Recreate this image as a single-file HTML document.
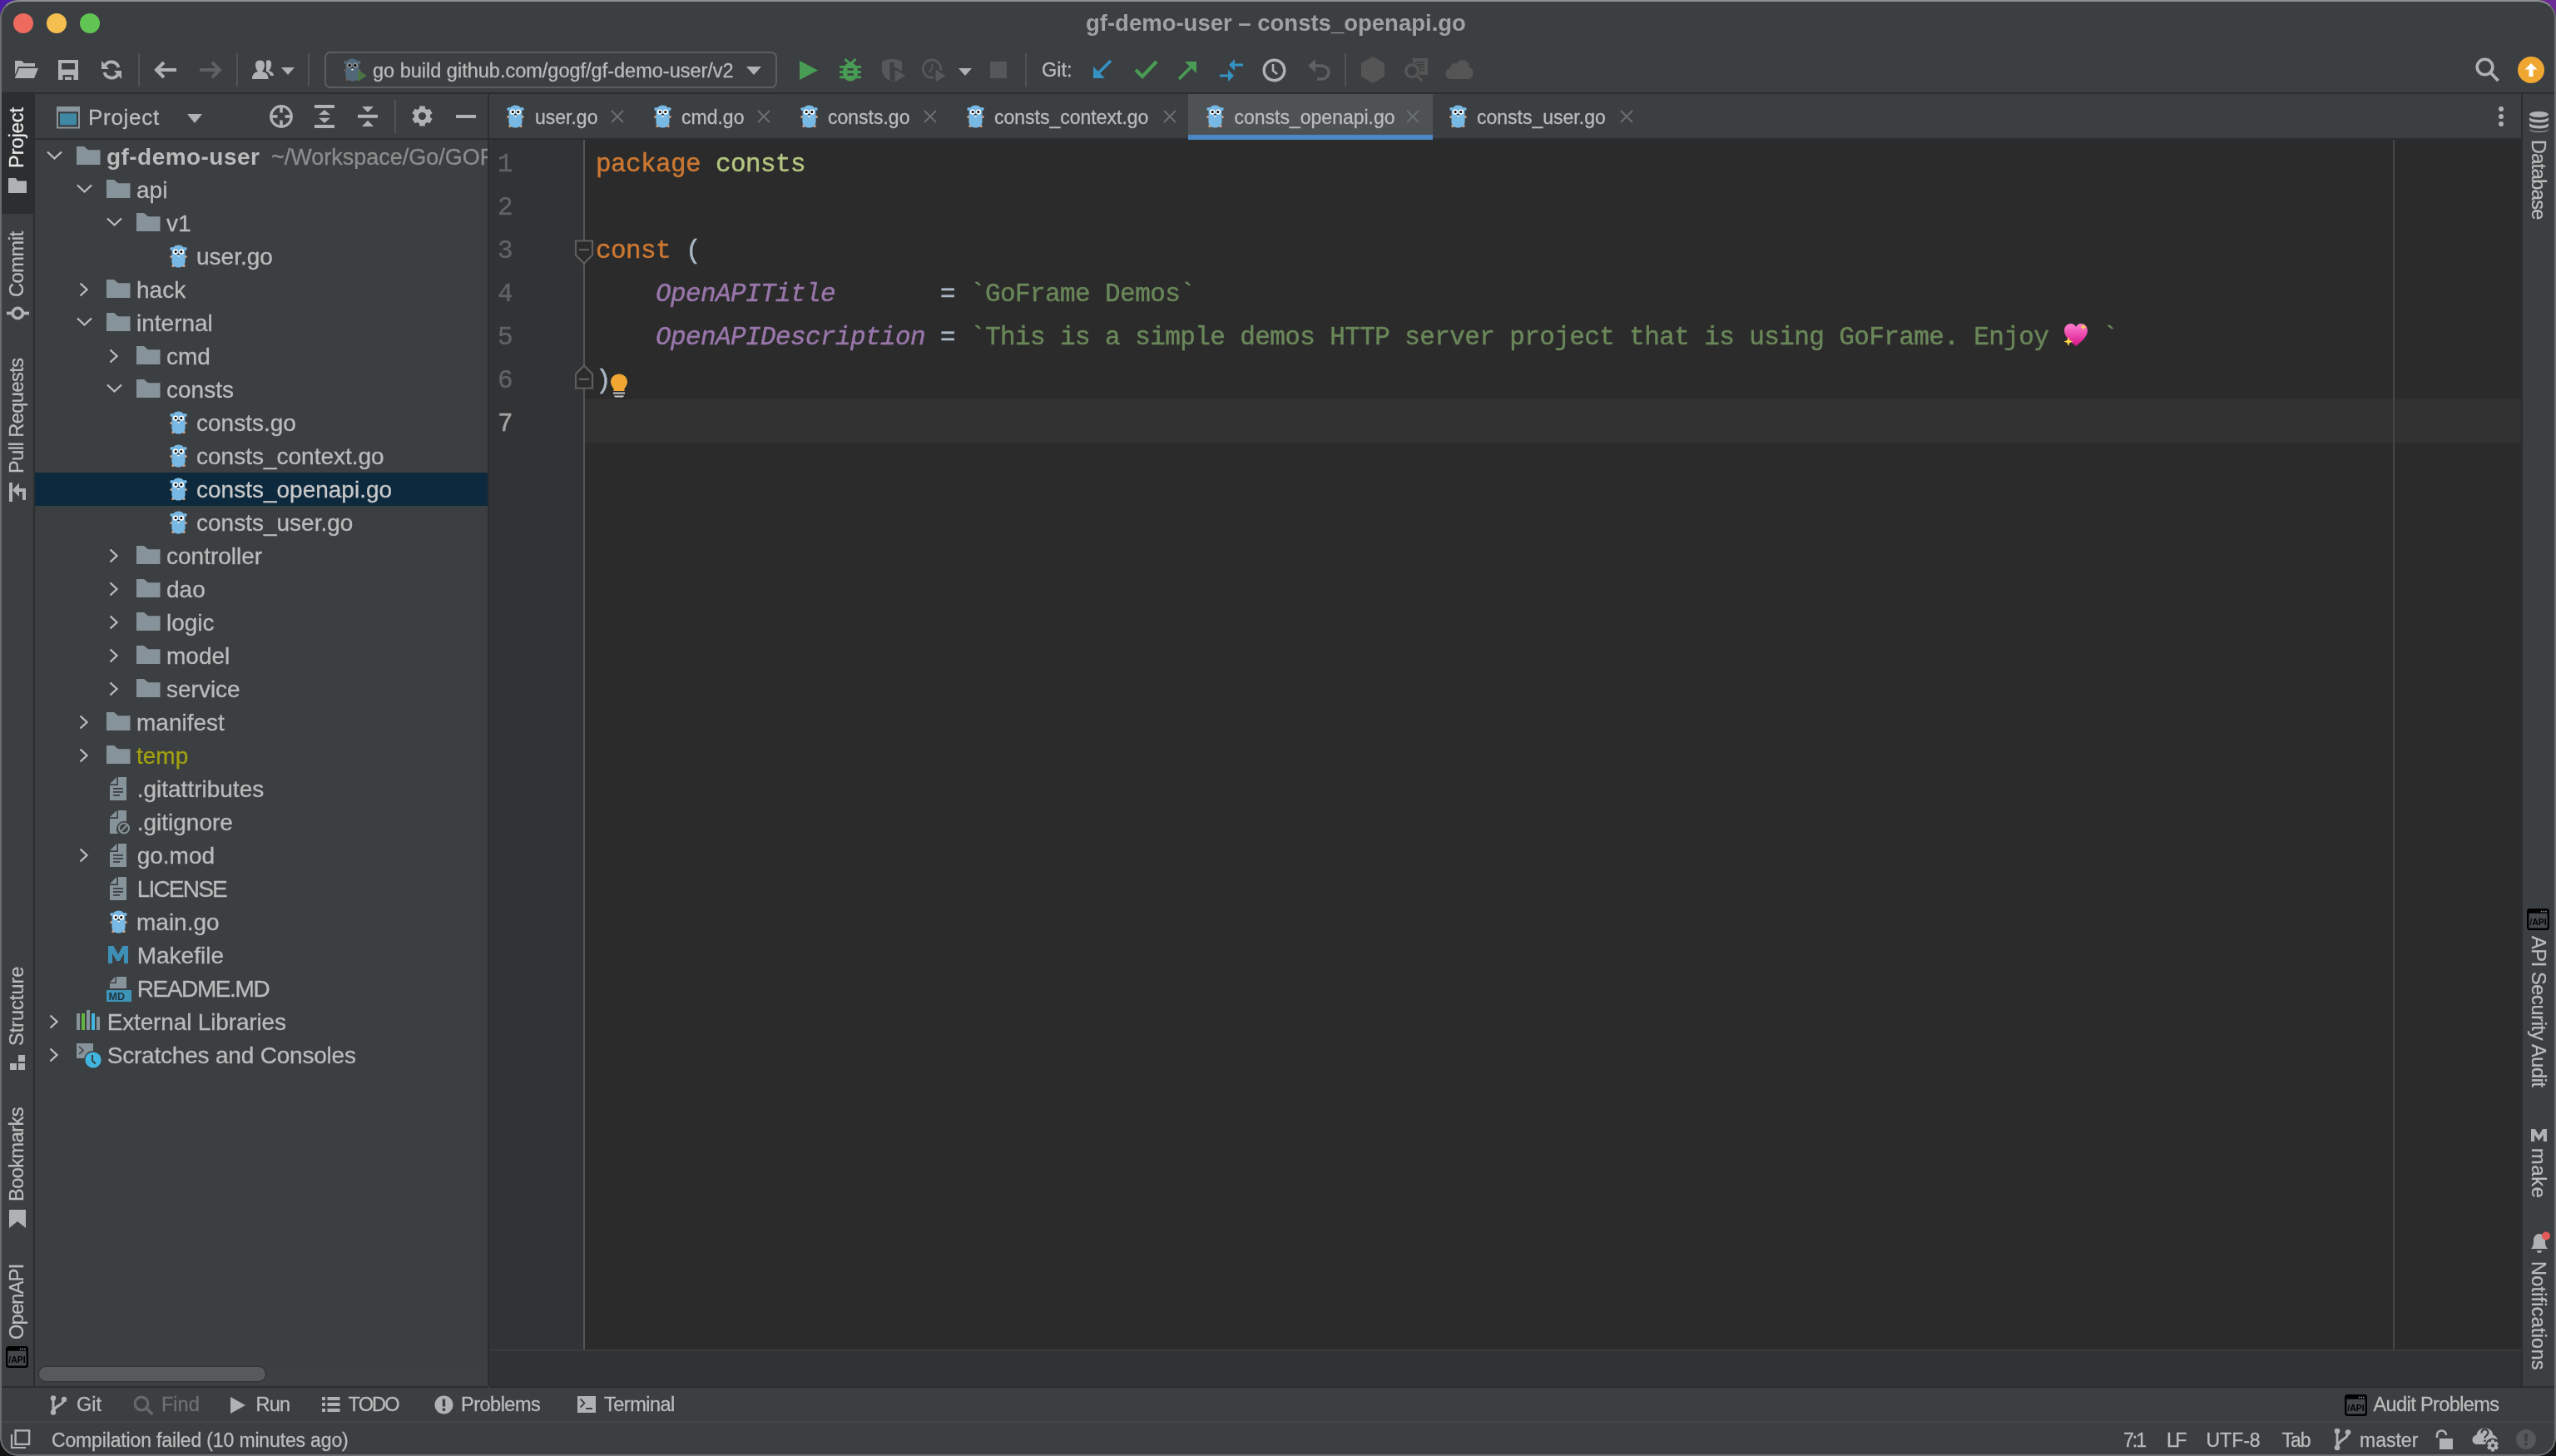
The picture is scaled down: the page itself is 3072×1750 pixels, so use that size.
<!DOCTYPE html><html><head><meta charset="utf-8"><title>GoLand</title><style>html,body{margin:0;padding:0;width:3072px;height:1750px;overflow:hidden;background:#1E1E1E}</style></head><body>
<div style="position:absolute;left:0px;top:0px;width:60px;height:60px;background:#4B1FA3;"></div>
<div style="position:absolute;left:3012px;top:0px;width:60px;height:60px;background:#6B2A98;"></div>
<div style="position:absolute;left:0px;top:1690px;width:60px;height:60px;background:#151515;"></div>
<div style="position:absolute;left:3012px;top:1690px;width:60px;height:60px;background:#151515;"></div>
<div style="position:absolute;left:0;top:0;width:3072px;height:1750px;border-radius:22px;background:#3C3F41;overflow:hidden;will-change:transform">
<div style="position:absolute;left:16px;top:16px;width:24px;height:24px;border-radius:50%;background:#EE6A5F"></div>
<div style="position:absolute;left:56px;top:16px;width:24px;height:24px;border-radius:50%;background:#F5BF4F"></div>
<div style="position:absolute;left:96px;top:16px;width:24px;height:24px;border-radius:50%;background:#61C554"></div>
<div style="position:absolute;left:1305.0px;top:13.5px;font-family:'Liberation Sans', sans-serif;font-size:27.5px;line-height:27.5px;color:#A0A1A2;font-weight:bold;font-style:normal;letter-spacing:0px;white-space:pre;">gf-demo-user – consts_openapi.go</div>
<div style="position:absolute;left:0px;top:111px;width:3072px;height:2px;background:#2B2D2F;"></div>
<svg style="position:absolute;left:17px;top:73px" width="30" height="22" viewBox="0 0 30 22"><path d="M1,0 H9 L12,3 H25 V7 H5 L1,17 Z" fill="#AFB1B3"/><path d="M6,9 H29 L24,21 H0.7 Z" fill="#AFB1B3"/></svg>
<svg style="position:absolute;left:70px;top:72px" width="24" height="24" viewBox="0 0 24 24"><path d="M0,0 H24 V24 H0 Z M4,4 V11.5 H20 V4 Z M5.5,18 V24 H18.5 V18 Z" fill="#AFB1B3" fill-rule="evenodd"/><rect x="8" y="20.5" width="8" height="3.5" fill="#AFB1B3"/></svg>
<svg style="position:absolute;left:122px;top:72px" width="24" height="24" viewBox="0 0 24 24"><path d="M20.5,9 A9,9 0 0 0 4,7" fill="none" stroke="#AFB1B3" stroke-width="3.8"/><path d="M0,1 L0,11 L9,11 Z" fill="#AFB1B3"/><path d="M3.5,15 A9,9 0 0 0 20,17" fill="none" stroke="#AFB1B3" stroke-width="3.8"/><path d="M24,23 L24,13 L15,13 Z" fill="#AFB1B3"/></svg>
<div style="position:absolute;left:166px;top:64px;width:2px;height:40px;background:#505355;"></div>
<svg style="position:absolute;left:185px;top:73px" width="28" height="22" viewBox="0 0 28 22"><path d="M27,11 H4 M12,2 L3,11 L12,20" fill="none" stroke="#AFB1B3" stroke-width="4"/></svg>
<svg style="position:absolute;left:239px;top:73px" width="28" height="22" viewBox="0 0 28 22"><path d="M1,11 H24 M16,2 L25,11 L16,20" fill="none" stroke="#5E6062" stroke-width="4"/></svg>
<div style="position:absolute;left:284px;top:64px;width:2px;height:40px;background:#505355;"></div>
<svg style="position:absolute;left:303px;top:71px" width="26" height="25" viewBox="0 0 26 25"><path d="M17,2 C21,0 24,3 23,8 C22.5,11 21,13 20,14 C24,15 26,17 26,20 H22 C21,17 19,15.5 17,15 Z" fill="#AFB1B3"/><path d="M9.5,1.5 C14,1.5 15.5,5 14.8,9 C14.3,12 13,14 12,15 C17,16 19.5,18.5 19.5,24 H0 C0,18.5 3,16 7,15 C6,14 4.7,12 4.2,9 C3.5,5 5,1.5 9.5,1.5 Z" fill="#AFB1B3" stroke="#3C3F41" stroke-width="0"/></svg>
<svg style="position:absolute;left:338px;top:81px" width="16" height="9" viewBox="0 0 16 9"><path d="M0,0 H16 L8,9 Z" fill="#AFB1B3"/></svg>
<div style="position:absolute;left:370px;top:64px;width:2px;height:40px;background:#505355;"></div>
<div style="position:absolute;left:390px;top:62px;width:540px;height:40px;border:2px solid #5B5E61;border-radius:7px"></div>
<svg style="position:absolute;left:413px;top:70px" width="21" height="28" viewBox="0 0 21 28"><g opacity="1.0"><circle cx="1.8" cy="14.5" r="1.6" fill="#6E5A50"/><circle cx="19.2" cy="14.5" r="1.6" fill="#6E5A50"/><circle cx="4" cy="25.5" r="1.7" fill="#6E5A50"/><circle cx="17" cy="25.5" r="1.7" fill="#6E5A50"/><ellipse cx="2.6" cy="5" rx="2.4" ry="2" fill="#51687B"/><ellipse cx="18.4" cy="5" rx="2.4" ry="2" fill="#51687B"/><path d="M2.6,9 C2.6,3.5 6,0.5 10.5,0.5 C15,0.5 18.4,3.5 18.4,9 L18.6,20 C18.6,25 15,27.6 10.5,27.6 C6,27.6 2.4,25 2.4,20 Z" fill="#51687B"/><circle cx="7" cy="8.6" r="3.1" fill="#8C8C8C"/><circle cx="14" cy="8.6" r="3.1" fill="#8C8C8C"/><circle cx="7.2" cy="8.6" r="1.5" fill="#000"/><circle cx="13.8" cy="8.6" r="1.5" fill="#000"/><ellipse cx="10.5" cy="11.8" rx="1.6" ry="1.1" fill="#222"/><rect x="9.4" y="12.6" width="2.2" height="1.8" fill="#fff"/></g></svg>
<svg style="position:absolute;left:430px;top:84px" width="11" height="14" viewBox="0 0 11 14"><path d="M0,0 L11,7 L0,14 Z" fill="#4B7447"/></svg>
<div style="position:absolute;left:448.0px;top:73.7px;font-family:'Liberation Sans', sans-serif;font-size:23.5px;line-height:23.5px;color:#BBBBBB;font-weight:normal;font-style:normal;letter-spacing:0px;white-space:pre;-webkit-text-stroke:0.3px currentColor;">go build github.com/gogf/gf-demo-user/v2</div>
<svg style="position:absolute;left:897px;top:80px" width="18" height="10" viewBox="0 0 18 10"><path d="M0,0 H18 L9,10 Z" fill="#AFB1B3"/></svg>
<svg style="position:absolute;left:961px;top:73px" width="22" height="23" viewBox="0 0 22 23"><path d="M0,0 L22,11.5 L0,23 Z" fill="#499C54"/></svg>
<svg style="position:absolute;left:1009px;top:69px" width="26" height="30" viewBox="0 0 26 30"><g fill="#499C54"><path d="M6.5,2 L13,8 L19.5,2" fill="none" stroke="#499C54" stroke-width="3"/><ellipse cx="13" cy="17.5" rx="9.3" ry="11"/><rect x="0" y="10" width="26" height="2.8"/><rect x="0" y="16.2" width="26" height="2.8"/><rect x="0" y="22.4" width="26" height="2.8"/></g><rect x="9.5" y="13.2" width="7.3" height="2.4" fill="#3C3F41"/><rect x="9.5" y="19.2" width="7.3" height="2.6" fill="#3C3F41"/></svg>
<svg style="position:absolute;left:1059px;top:71px" width="32" height="30" viewBox="0 0 32 30"><path d="M1,3 C5,1 9,0 13,0 C17,0 21,1 25,3 V12 C25,19 21,24 13,27 C5,24 1,19 1,12 Z" fill="#555759"/><rect x="10.5" y="4" width="5" height="22" fill="#3C3F41"/><path d="M15.5,10.5 L31.5,20 L15.5,29.5 Z" fill="#555759" stroke="#3C3F41" stroke-width="2.2"/></svg>
<svg style="position:absolute;left:1107px;top:70px" width="32" height="31" viewBox="0 0 32 31"><circle cx="13" cy="12.7" r="10.7" fill="none" stroke="#555759" stroke-width="2.8"/><path d="M13.3,6.5 V12.5 L9.5,16.5" fill="none" stroke="#555759" stroke-width="2"/><path d="M16.5,11.5 L31.5,21 L16.5,30.5 Z" fill="#555759" stroke="#3C3F41" stroke-width="2.2"/></svg>
<svg style="position:absolute;left:1152px;top:81.5px" width="16" height="9" viewBox="0 0 16 9"><path d="M0,0 H16 L8,9 Z" fill="#AFB1B3"/></svg>
<div style="position:absolute;left:1190px;top:74px;width:20px;height:20px;background:#555759;"></div>
<div style="position:absolute;left:1232px;top:64px;width:2px;height:40px;background:#505355;"></div>
<div style="position:absolute;left:1252.0px;top:73.2px;font-family:'Liberation Sans', sans-serif;font-size:23.5px;line-height:23.5px;color:#BBBBBB;font-weight:normal;font-style:normal;letter-spacing:0px;white-space:pre;-webkit-text-stroke:0.3px currentColor;">Git:</div>
<svg style="position:absolute;left:1312px;top:71px" width="25" height="25" viewBox="0 0 25 25"><path d="M23,2 L6,19" stroke="#3592C4" stroke-width="3.6"/><path d="M2,9 L2,23 L16,23 Z" fill="#3592C4"/></svg>
<svg style="position:absolute;left:1363px;top:72px" width="29" height="23" viewBox="0 0 29 23"><path d="M2,12 L10,20 L27,2" fill="none" stroke="#499C54" stroke-width="4.2"/></svg>
<svg style="position:absolute;left:1415px;top:72px" width="25" height="25" viewBox="0 0 25 25"><path d="M2,23 L19,6" stroke="#499C54" stroke-width="3.6"/><path d="M9,2 L23,2 L23,16 Z" fill="#499C54"/></svg>
<svg style="position:absolute;left:1465px;top:70px" width="30" height="29" viewBox="0 0 30 29"><path d="M29,8 H19 M1,21 H11" stroke="#3592C4" stroke-width="3.2"/><path d="M12,8 L19,1 L19,15 Z M18,21 L11,14 L11,28 Z" fill="#3592C4"/></svg>
<svg style="position:absolute;left:1517px;top:70px" width="29" height="29" viewBox="0 0 29 29"><circle cx="14.5" cy="14.5" r="12.3" fill="none" stroke="#AFB1B3" stroke-width="3.4"/><path d="M13,7 V15 L18,19" fill="none" stroke="#AFB1B3" stroke-width="2.6"/></svg>
<svg style="position:absolute;left:1571px;top:70px" width="28" height="27" viewBox="0 0 28 27"><path d="M8,9 H17 C22,9 26,12.5 26,17 C26,21.5 22,25 17,25 H12" fill="none" stroke="#5E6062" stroke-width="3.4"/><path d="M1,9 L10,1 L10,17 Z" fill="#5E6062"/></svg>
<div style="position:absolute;left:1616px;top:64px;width:2px;height:40px;background:#505355;"></div>
<svg style="position:absolute;left:1636px;top:68px" width="28" height="32" viewBox="0 0 28 32"><path d="M14,0 L28,8 V24 L14,32 L0,24 V8 Z" fill="#555555"/></svg>
<svg style="position:absolute;left:1686px;top:69px" width="34" height="32" viewBox="0 0 34 32"><path d="M12,1 H30 V21 H19.5 A9.5,9.5 0 0 0 12,6 Z" fill="#555555"/><rect x="16" y="5" width="10" height="1.6" fill="#3C3F41"/><rect x="18" y="8.2" width="8" height="1.6" fill="#3C3F41"/><rect x="19.5" y="11.4" width="6.5" height="1.6" fill="#3C3F41"/><rect x="20" y="14.6" width="6" height="1.6" fill="#3C3F41"/><circle cx="11.2" cy="16.2" r="7.4" fill="none" stroke="#555555" stroke-width="3.4"/><path d="M16.5,21.5 L23,28" stroke="#555555" stroke-width="3.4"/></svg>
<svg style="position:absolute;left:1737px;top:71px" width="34" height="25" viewBox="0 0 34 25"><path d="M6.5,24 C3,24 0.5,21 0.5,17.5 C0.5,14 3,11.5 6,11 C6.5,7 8.5,5 11,5 C12,5 13,5.3 13.5,5.8 C15,2.7 18,1 21,1 C25.5,1 28.5,4.5 29,10 C32,10.8 33.5,13.5 33.5,17 C33.5,21 31,24 27,24 Z" fill="#555555"/></svg>
<svg style="position:absolute;left:2975px;top:69px" width="30" height="30" viewBox="0 0 30 30"><circle cx="11.5" cy="11.5" r="9.3" fill="none" stroke="#AFB1B3" stroke-width="3.6"/><path d="M18,18 L27.5,28" stroke="#AFB1B3" stroke-width="3.8"/></svg>
<div style="position:absolute;left:3026px;top:68px;width:32px;height:32px;border-radius:50%;background:#F0A732"></div>
<svg style="position:absolute;left:3034px;top:76px" width="16" height="16" viewBox="0 0 16 16"><path d="M8,0 L15.5,7.5 H10.5 V16 H5.5 V7.5 H0.5 Z" fill="#fff"/></svg>
<div style="position:absolute;left:40px;top:113px;width:2px;height:1553px;background:#2B2D2F;"></div>
<div style="position:absolute;left:0px;top:113px;width:40px;height:144px;background:#2C2E30;"></div>
<div style="position:absolute;left:9.1px;top:202.0px;transform-origin:0 0;transform:rotate(-90deg);font-family:'Liberation Sans', sans-serif;font-size:23.5px;line-height:23.5px;color:#E8E8E8;letter-spacing:0px;white-space:pre;-webkit-text-stroke:0.3px currentColor">Project</div>
<svg style="position:absolute;left:10px;top:214px" width="22" height="18" viewBox="0 0 22 18"><path d="M0,0 H9 L11,3.5 H22 V18 H0 Z" fill="#AFB1B3"/></svg>
<div style="position:absolute;left:9.1px;top:356.5px;transform-origin:0 0;transform:rotate(-90deg);font-family:'Liberation Sans', sans-serif;font-size:23.5px;line-height:23.5px;color:#BBBBBB;letter-spacing:-0.35px;white-space:pre;-webkit-text-stroke:0.3px currentColor">Commit</div>
<svg style="position:absolute;left:7.5px;top:367.5px" width="27" height="17" viewBox="0 0 27 17"><circle cx="13.3" cy="8.5" r="6.1" fill="none" stroke="#AFB1B3" stroke-width="3.7"/><rect x="0" y="6.6" width="6" height="3.8" fill="#AFB1B3"/><rect x="20.6" y="6.6" width="6.4" height="3.8" fill="#AFB1B3"/></svg>
<div style="position:absolute;left:9.1px;top:569.0px;transform-origin:0 0;transform:rotate(-90deg);font-family:'Liberation Sans', sans-serif;font-size:23.5px;line-height:23.5px;color:#BBBBBB;letter-spacing:-0.5px;white-space:pre;-webkit-text-stroke:0.3px currentColor">Pull Requests</div>
<svg style="position:absolute;left:11px;top:580px" width="22" height="23" viewBox="0 0 22 23"><rect x="0" y="0" width="4" height="23" fill="#AFB1B3"/><path d="M4,9 L12,0.5 L12,7 H20 V21 H16 V11 H12 V17 Z" fill="#AFB1B3"/></svg>
<div style="position:absolute;left:9.1px;top:1256.5px;transform-origin:0 0;transform:rotate(-90deg);font-family:'Liberation Sans', sans-serif;font-size:23.5px;line-height:23.5px;color:#BBBBBB;letter-spacing:0px;white-space:pre;-webkit-text-stroke:0.3px currentColor">Structure</div>
<svg style="position:absolute;left:12px;top:1268px" width="18" height="18" viewBox="0 0 18 18"><rect x="0" y="10" width="8" height="8" fill="#AFB1B3"/><rect x="10" y="0" width="8" height="8" fill="#AFB1B3"/><rect x="10" y="10" width="8" height="8" fill="#AFB1B3"/></svg>
<div style="position:absolute;left:9.1px;top:1443.5px;transform-origin:0 0;transform:rotate(-90deg);font-family:'Liberation Sans', sans-serif;font-size:23.5px;line-height:23.5px;color:#BBBBBB;letter-spacing:-0.5px;white-space:pre;-webkit-text-stroke:0.3px currentColor">Bookmarks</div>
<svg style="position:absolute;left:11px;top:1454px" width="20" height="22" viewBox="0 0 20 22"><path d="M0,0 H20 V22 L10,14 L0,22 Z" fill="#AFB1B3"/></svg>
<div style="position:absolute;left:9.1px;top:1610.0px;transform-origin:0 0;transform:rotate(-90deg);font-family:'Liberation Sans', sans-serif;font-size:23.5px;line-height:23.5px;color:#BBBBBB;letter-spacing:-0.7px;white-space:pre;-webkit-text-stroke:0.3px currentColor">OpenAPI</div>
<svg style="position:absolute;left:7px;top:1618px" width="27" height="26" viewBox="0 0 27 26"><rect x="1.2" y="1.2" width="24.6" height="23.6" rx="2" fill="#45484A" stroke="#000" stroke-width="2.4"/><rect x="1.2" y="1.2" width="24.6" height="4.5" fill="#000"/><circle cx="17.5" cy="3.5" r="0.9" fill="#888"/><circle cx="20.3" cy="3.5" r="0.9" fill="#888"/><circle cx="23" cy="3.5" r="0.9" fill="#888"/><text x="13.5" y="19.5" font-family="Liberation Sans" font-weight="bold" font-size="10.5" fill="#000" text-anchor="middle">/API</text></svg>
<div style="position:absolute;left:3030px;top:113px;width:2px;height:1553px;background:#2B2D2F;"></div>
<svg style="position:absolute;left:3040px;top:134px" width="23" height="25" viewBox="0 0 23 25"><g fill="#AFB1B3"><ellipse cx="11.5" cy="3.5" rx="11.5" ry="3.5"/><path d="M0,6.5 C0,8.5 5,10 11.5,10 C18,10 23,8.5 23,6.5 V10 C23,12 18,13.5 11.5,13.5 C5,13.5 0,12 0,10 Z"/><path d="M0,13.5 C0,15.5 5,17 11.5,17 C18,17 23,15.5 23,13.5 V17 C23,19 18,20.5 11.5,20.5 C5,20.5 0,19 0,17 Z"/><path d="M0,20.5 C0,22.5 5,24 11.5,24 C18,24 23,22.5 23,20.5 V21 C23,23.5 18,25 11.5,25 C5,25 0,23.5 0,21 Z"/></g></svg>
<div style="position:absolute;left:3062.3px;top:168.0px;transform-origin:0 0;transform:rotate(90deg);font-family:'Liberation Sans', sans-serif;font-size:23.5px;line-height:23.5px;color:#BBBBBB;letter-spacing:-0.6px;white-space:pre;-webkit-text-stroke:0.3px currentColor">Database</div>
<svg style="position:absolute;left:3037px;top:1092px" width="27" height="26" viewBox="0 0 27 26"><rect x="1.2" y="1.2" width="24.6" height="23.6" rx="2" fill="#45484A" stroke="#000" stroke-width="2.4"/><rect x="1.2" y="1.2" width="24.6" height="4.5" fill="#000"/><circle cx="17.5" cy="3.5" r="0.9" fill="#888"/><circle cx="20.3" cy="3.5" r="0.9" fill="#888"/><circle cx="23" cy="3.5" r="0.9" fill="#888"/><text x="13.5" y="19.5" font-family="Liberation Sans" font-weight="bold" font-size="10.5" fill="#000" text-anchor="middle">/API</text></svg>
<div style="position:absolute;left:3062.3px;top:1124.5px;transform-origin:0 0;transform:rotate(90deg);font-family:'Liberation Sans', sans-serif;font-size:23.5px;line-height:23.5px;color:#BBBBBB;letter-spacing:-0.35px;white-space:pre;-webkit-text-stroke:0.3px currentColor">API Security Audit</div>
<svg style="position:absolute;left:3041.5px;top:1356.5px" width="19" height="15.5" viewBox="0 0 19 15.5"><path d="M0,0 H5 L9.5,7.5 L14,0 H19 V15.5 H14.8 V7 L9.5,14 L4.2,7 V15.5 H0 Z" fill="#AFB1B3"/></svg>
<div style="position:absolute;left:3062.3px;top:1380.0px;transform-origin:0 0;transform:rotate(90deg);font-family:'Liberation Sans', sans-serif;font-size:23.5px;line-height:23.5px;color:#BBBBBB;letter-spacing:0.8px;white-space:pre;-webkit-text-stroke:0.3px currentColor">make</div>
<svg style="position:absolute;left:3040px;top:1480px" width="26" height="28" viewBox="0 0 26 28"><path d="M2,21 C5,18 5,14 5,11 C5,6 8.5,3 12,3 C15.5,3 19,6 19,11 C19,14 19,18 22,21 Z" fill="#AFB1B3"/><path d="M9,23 A3,3 0 0 0 15,23 Z" fill="#AFB1B3"/><circle cx="20" cy="5.5" r="5" fill="#E55B5B"/></svg>
<div style="position:absolute;left:3062.3px;top:1515.5px;transform-origin:0 0;transform:rotate(90deg);font-family:'Liberation Sans', sans-serif;font-size:23.5px;line-height:23.5px;color:#BBBBBB;letter-spacing:0.2px;white-space:pre;-webkit-text-stroke:0.3px currentColor">Notifications</div>
<div style="position:absolute;left:42px;top:166px;width:544px;height:2px;background:#2B2D2F;"></div>
<div style="position:absolute;left:586px;top:113px;width:2px;height:1553px;background:#2B2D2F;"></div>
<svg style="position:absolute;left:68px;top:127.5px" width="28" height="27" viewBox="0 0 28 27"><rect x="0" y="0" width="28" height="26.5" fill="#8A969D"/><rect x="2" y="6.3" width="24" height="18.2" fill="#3A3A3C"/><rect x="4" y="8.3" width="20" height="14" fill="#3E88A4"/></svg>
<div style="position:absolute;left:106.0px;top:128.2px;font-family:'Liberation Sans', sans-serif;font-size:26px;line-height:26px;color:#BBBBBB;font-weight:normal;font-style:normal;letter-spacing:0.7px;white-space:pre;-webkit-text-stroke:0.3px currentColor;">Project</div>
<svg style="position:absolute;left:225px;top:137px" width="18" height="11" viewBox="0 0 18 11"><path d="M0,0 H18 L9,11 Z" fill="#AFB1B3"/></svg>
<svg style="position:absolute;left:324px;top:126px" width="28" height="28" viewBox="0 0 28 28"><circle cx="14" cy="14" r="12.3" fill="none" stroke="#AFB1B3" stroke-width="3.3"/><rect x="12.2" y="1" width="3.6" height="8.5" fill="#AFB1B3"/><rect x="12.2" y="18.5" width="3.6" height="8.5" fill="#AFB1B3"/><rect x="1" y="12.2" width="8.5" height="3.6" fill="#AFB1B3"/><rect x="18.5" y="12.2" width="8.5" height="3.6" fill="#AFB1B3"/></svg>
<svg style="position:absolute;left:378px;top:126px" width="24" height="28" viewBox="0 0 24 28"><g fill="#AFB1B3"><rect x="0" y="0" width="24" height="4"/><rect x="0" y="24" width="24" height="4"/><path d="M5.2,12 L12,6 L18.8,12 Z"/><path d="M5.2,15.8 L12,22 L18.8,15.8 Z"/></g></svg>
<svg style="position:absolute;left:430px;top:127px" width="24" height="26" viewBox="0 0 24 26"><g fill="#AFB1B3"><rect x="0" y="10.8" width="24" height="4"/><path d="M5,1 L19,1 L12,8 Z"/><path d="M5,25 L19,25 L12,17.8 Z"/></g></svg>
<div style="position:absolute;left:474px;top:120px;width:2px;height:40px;background:#505355;"></div>
<svg style="position:absolute;left:495px;top:127px" width="25" height="25" viewBox="0 0 25 25"><path d="M9.06,3.54 L9.26,0.43 L15.74,0.43 L15.94,3.54 A9.6,9.6 0 0 1 18.54,5.04 L18.54,5.04 L21.34,3.66 L24.57,9.26 L21.98,11.00 A9.6,9.6 0 0 1 21.98,14.00 L21.98,14.00 L24.57,15.74 L21.34,21.34 L18.54,19.96 A9.6,9.6 0 0 1 15.94,21.46 L15.94,21.46 L15.74,24.57 L9.26,24.57 L9.06,21.46 A9.6,9.6 0 0 1 6.46,19.96 L6.46,19.96 L3.66,21.34 L0.43,15.74 L3.02,14.00 A9.6,9.6 0 0 1 3.02,11.00 L3.02,11.00 L0.43,9.26 L3.66,3.66 L6.46,5.04 A9.6,9.6 0 0 1 9.06,3.54 Z M12.5,8 A4.5,4.5 0 1 0 12.51,8 Z" fill="#AFB1B3" fill-rule="evenodd"/></svg>
<div style="position:absolute;left:548px;top:138px;width:24px;height:4px;background:#AFB1B3;"></div>
<div style="position:absolute;left:42px;top:568px;width:544px;height:40px;background:#0D293E;"></div>
<svg style="position:absolute;left:55.5px;top:181px" width="19" height="12" viewBox="0 0 19 12"><path d="M1,1.5 L9.5,9.5 L18,1.5" fill="none" stroke="#BDBDBD" stroke-width="2.3"/></svg>
<svg style="position:absolute;left:91.5px;top:176px" width="29" height="22" viewBox="0 0 29 22"><path d="M0,0 H9 L14,4.3 H28.5 V22 H0 Z" fill="#87939A"/></svg>
<div style="position:absolute;left:128.0px;top:175.0px;font-family:'Liberation Sans', sans-serif;font-size:28px;line-height:28px;color:#BBBBBB;font-weight:bold;font-style:normal;letter-spacing:0.45px;white-space:pre;">gf-demo-user</div>
<div style="position:absolute;left:326.0px;top:175.9px;font-family:'Liberation Sans', sans-serif;font-size:27px;line-height:27px;color:#8C8C8C;font-weight:normal;font-style:normal;letter-spacing:0px;white-space:pre;-webkit-text-stroke:0.3px currentColor;width:260px;overflow:hidden">~/Workspace/Go/GOPATH</div>
<svg style="position:absolute;left:91.5px;top:221px" width="19" height="12" viewBox="0 0 19 12"><path d="M1,1.5 L9.5,9.5 L18,1.5" fill="none" stroke="#BDBDBD" stroke-width="2.3"/></svg>
<svg style="position:absolute;left:127.5px;top:216px" width="29" height="22" viewBox="0 0 29 22"><path d="M0,0 H9 L14,4.3 H28.5 V22 H0 Z" fill="#87939A"/></svg>
<div style="position:absolute;left:164.0px;top:215.0px;font-family:'Liberation Sans', sans-serif;font-size:28px;line-height:28px;color:#BBBBBB;font-weight:normal;font-style:normal;letter-spacing:0px;white-space:pre;-webkit-text-stroke:0.3px currentColor;">api</div>
<svg style="position:absolute;left:127.5px;top:261px" width="19" height="12" viewBox="0 0 19 12"><path d="M1,1.5 L9.5,9.5 L18,1.5" fill="none" stroke="#BDBDBD" stroke-width="2.3"/></svg>
<svg style="position:absolute;left:163.5px;top:256px" width="29" height="22" viewBox="0 0 29 22"><path d="M0,0 H9 L14,4.3 H28.5 V22 H0 Z" fill="#87939A"/></svg>
<div style="position:absolute;left:200.0px;top:255.0px;font-family:'Liberation Sans', sans-serif;font-size:28px;line-height:28px;color:#BBBBBB;font-weight:normal;font-style:normal;letter-spacing:0px;white-space:pre;-webkit-text-stroke:0.3px currentColor;">v1</div>
<svg style="position:absolute;left:204px;top:294px" width="21" height="28" viewBox="0 0 21 28"><g opacity="1.0"><circle cx="1.8" cy="14.5" r="1.6" fill="#D2A184"/><circle cx="19.2" cy="14.5" r="1.6" fill="#D2A184"/><circle cx="4" cy="25.5" r="1.7" fill="#D2A184"/><circle cx="17" cy="25.5" r="1.7" fill="#D2A184"/><ellipse cx="2.6" cy="5" rx="2.4" ry="2" fill="#77B8E4"/><ellipse cx="18.4" cy="5" rx="2.4" ry="2" fill="#77B8E4"/><path d="M2.6,9 C2.6,3.5 6,0.5 10.5,0.5 C15,0.5 18.4,3.5 18.4,9 L18.6,20 C18.6,25 15,27.6 10.5,27.6 C6,27.6 2.4,25 2.4,20 Z" fill="#77B8E4"/><circle cx="7" cy="8.6" r="3.1" fill="#fff"/><circle cx="14" cy="8.6" r="3.1" fill="#fff"/><circle cx="7.2" cy="8.6" r="1.5" fill="#000"/><circle cx="13.8" cy="8.6" r="1.5" fill="#000"/><ellipse cx="10.5" cy="11.8" rx="1.6" ry="1.1" fill="#222"/><rect x="9.4" y="12.6" width="2.2" height="1.8" fill="#fff"/></g></svg>
<div style="position:absolute;left:236.0px;top:295.0px;font-family:'Liberation Sans', sans-serif;font-size:28px;line-height:28px;color:#BBBBBB;font-weight:normal;font-style:normal;letter-spacing:0px;white-space:pre;-webkit-text-stroke:0.3px currentColor;">user.go</div>
<svg style="position:absolute;left:94.5px;top:339px" width="12" height="18" viewBox="0 0 12 18"><path d="M1.5,1.5 L9.5,9 L1.5,16.5" fill="none" stroke="#BDBDBD" stroke-width="2.3"/></svg>
<svg style="position:absolute;left:127.5px;top:336px" width="29" height="22" viewBox="0 0 29 22"><path d="M0,0 H9 L14,4.3 H28.5 V22 H0 Z" fill="#87939A"/></svg>
<div style="position:absolute;left:164.0px;top:335.0px;font-family:'Liberation Sans', sans-serif;font-size:28px;line-height:28px;color:#BBBBBB;font-weight:normal;font-style:normal;letter-spacing:0px;white-space:pre;-webkit-text-stroke:0.3px currentColor;">hack</div>
<svg style="position:absolute;left:91.5px;top:381px" width="19" height="12" viewBox="0 0 19 12"><path d="M1,1.5 L9.5,9.5 L18,1.5" fill="none" stroke="#BDBDBD" stroke-width="2.3"/></svg>
<svg style="position:absolute;left:127.5px;top:376px" width="29" height="22" viewBox="0 0 29 22"><path d="M0,0 H9 L14,4.3 H28.5 V22 H0 Z" fill="#87939A"/></svg>
<div style="position:absolute;left:164.0px;top:375.0px;font-family:'Liberation Sans', sans-serif;font-size:28px;line-height:28px;color:#BBBBBB;font-weight:normal;font-style:normal;letter-spacing:0px;white-space:pre;-webkit-text-stroke:0.3px currentColor;">internal</div>
<svg style="position:absolute;left:130.5px;top:419px" width="12" height="18" viewBox="0 0 12 18"><path d="M1.5,1.5 L9.5,9 L1.5,16.5" fill="none" stroke="#BDBDBD" stroke-width="2.3"/></svg>
<svg style="position:absolute;left:163.5px;top:416px" width="29" height="22" viewBox="0 0 29 22"><path d="M0,0 H9 L14,4.3 H28.5 V22 H0 Z" fill="#87939A"/></svg>
<div style="position:absolute;left:200.0px;top:415.0px;font-family:'Liberation Sans', sans-serif;font-size:28px;line-height:28px;color:#BBBBBB;font-weight:normal;font-style:normal;letter-spacing:0px;white-space:pre;-webkit-text-stroke:0.3px currentColor;">cmd</div>
<svg style="position:absolute;left:127.5px;top:461px" width="19" height="12" viewBox="0 0 19 12"><path d="M1,1.5 L9.5,9.5 L18,1.5" fill="none" stroke="#BDBDBD" stroke-width="2.3"/></svg>
<svg style="position:absolute;left:163.5px;top:456px" width="29" height="22" viewBox="0 0 29 22"><path d="M0,0 H9 L14,4.3 H28.5 V22 H0 Z" fill="#87939A"/></svg>
<div style="position:absolute;left:200.0px;top:455.0px;font-family:'Liberation Sans', sans-serif;font-size:28px;line-height:28px;color:#BBBBBB;font-weight:normal;font-style:normal;letter-spacing:0px;white-space:pre;-webkit-text-stroke:0.3px currentColor;">consts</div>
<svg style="position:absolute;left:204px;top:494px" width="21" height="28" viewBox="0 0 21 28"><g opacity="1.0"><circle cx="1.8" cy="14.5" r="1.6" fill="#D2A184"/><circle cx="19.2" cy="14.5" r="1.6" fill="#D2A184"/><circle cx="4" cy="25.5" r="1.7" fill="#D2A184"/><circle cx="17" cy="25.5" r="1.7" fill="#D2A184"/><ellipse cx="2.6" cy="5" rx="2.4" ry="2" fill="#77B8E4"/><ellipse cx="18.4" cy="5" rx="2.4" ry="2" fill="#77B8E4"/><path d="M2.6,9 C2.6,3.5 6,0.5 10.5,0.5 C15,0.5 18.4,3.5 18.4,9 L18.6,20 C18.6,25 15,27.6 10.5,27.6 C6,27.6 2.4,25 2.4,20 Z" fill="#77B8E4"/><circle cx="7" cy="8.6" r="3.1" fill="#fff"/><circle cx="14" cy="8.6" r="3.1" fill="#fff"/><circle cx="7.2" cy="8.6" r="1.5" fill="#000"/><circle cx="13.8" cy="8.6" r="1.5" fill="#000"/><ellipse cx="10.5" cy="11.8" rx="1.6" ry="1.1" fill="#222"/><rect x="9.4" y="12.6" width="2.2" height="1.8" fill="#fff"/></g></svg>
<div style="position:absolute;left:236.0px;top:495.0px;font-family:'Liberation Sans', sans-serif;font-size:28px;line-height:28px;color:#BBBBBB;font-weight:normal;font-style:normal;letter-spacing:0px;white-space:pre;-webkit-text-stroke:0.3px currentColor;">consts.go</div>
<svg style="position:absolute;left:204px;top:534px" width="21" height="28" viewBox="0 0 21 28"><g opacity="1.0"><circle cx="1.8" cy="14.5" r="1.6" fill="#D2A184"/><circle cx="19.2" cy="14.5" r="1.6" fill="#D2A184"/><circle cx="4" cy="25.5" r="1.7" fill="#D2A184"/><circle cx="17" cy="25.5" r="1.7" fill="#D2A184"/><ellipse cx="2.6" cy="5" rx="2.4" ry="2" fill="#77B8E4"/><ellipse cx="18.4" cy="5" rx="2.4" ry="2" fill="#77B8E4"/><path d="M2.6,9 C2.6,3.5 6,0.5 10.5,0.5 C15,0.5 18.4,3.5 18.4,9 L18.6,20 C18.6,25 15,27.6 10.5,27.6 C6,27.6 2.4,25 2.4,20 Z" fill="#77B8E4"/><circle cx="7" cy="8.6" r="3.1" fill="#fff"/><circle cx="14" cy="8.6" r="3.1" fill="#fff"/><circle cx="7.2" cy="8.6" r="1.5" fill="#000"/><circle cx="13.8" cy="8.6" r="1.5" fill="#000"/><ellipse cx="10.5" cy="11.8" rx="1.6" ry="1.1" fill="#222"/><rect x="9.4" y="12.6" width="2.2" height="1.8" fill="#fff"/></g></svg>
<div style="position:absolute;left:236.0px;top:535.0px;font-family:'Liberation Sans', sans-serif;font-size:28px;line-height:28px;color:#BBBBBB;font-weight:normal;font-style:normal;letter-spacing:0px;white-space:pre;-webkit-text-stroke:0.3px currentColor;">consts_context.go</div>
<svg style="position:absolute;left:204px;top:574px" width="21" height="28" viewBox="0 0 21 28"><g opacity="1.0"><circle cx="1.8" cy="14.5" r="1.6" fill="#D2A184"/><circle cx="19.2" cy="14.5" r="1.6" fill="#D2A184"/><circle cx="4" cy="25.5" r="1.7" fill="#D2A184"/><circle cx="17" cy="25.5" r="1.7" fill="#D2A184"/><ellipse cx="2.6" cy="5" rx="2.4" ry="2" fill="#77B8E4"/><ellipse cx="18.4" cy="5" rx="2.4" ry="2" fill="#77B8E4"/><path d="M2.6,9 C2.6,3.5 6,0.5 10.5,0.5 C15,0.5 18.4,3.5 18.4,9 L18.6,20 C18.6,25 15,27.6 10.5,27.6 C6,27.6 2.4,25 2.4,20 Z" fill="#77B8E4"/><circle cx="7" cy="8.6" r="3.1" fill="#fff"/><circle cx="14" cy="8.6" r="3.1" fill="#fff"/><circle cx="7.2" cy="8.6" r="1.5" fill="#000"/><circle cx="13.8" cy="8.6" r="1.5" fill="#000"/><ellipse cx="10.5" cy="11.8" rx="1.6" ry="1.1" fill="#222"/><rect x="9.4" y="12.6" width="2.2" height="1.8" fill="#fff"/></g></svg>
<div style="position:absolute;left:236.0px;top:575.0px;font-family:'Liberation Sans', sans-serif;font-size:28px;line-height:28px;color:#C8C8C8;font-weight:normal;font-style:normal;letter-spacing:0px;white-space:pre;-webkit-text-stroke:0.3px currentColor;">consts_openapi.go</div>
<svg style="position:absolute;left:204px;top:614px" width="21" height="28" viewBox="0 0 21 28"><g opacity="1.0"><circle cx="1.8" cy="14.5" r="1.6" fill="#D2A184"/><circle cx="19.2" cy="14.5" r="1.6" fill="#D2A184"/><circle cx="4" cy="25.5" r="1.7" fill="#D2A184"/><circle cx="17" cy="25.5" r="1.7" fill="#D2A184"/><ellipse cx="2.6" cy="5" rx="2.4" ry="2" fill="#77B8E4"/><ellipse cx="18.4" cy="5" rx="2.4" ry="2" fill="#77B8E4"/><path d="M2.6,9 C2.6,3.5 6,0.5 10.5,0.5 C15,0.5 18.4,3.5 18.4,9 L18.6,20 C18.6,25 15,27.6 10.5,27.6 C6,27.6 2.4,25 2.4,20 Z" fill="#77B8E4"/><circle cx="7" cy="8.6" r="3.1" fill="#fff"/><circle cx="14" cy="8.6" r="3.1" fill="#fff"/><circle cx="7.2" cy="8.6" r="1.5" fill="#000"/><circle cx="13.8" cy="8.6" r="1.5" fill="#000"/><ellipse cx="10.5" cy="11.8" rx="1.6" ry="1.1" fill="#222"/><rect x="9.4" y="12.6" width="2.2" height="1.8" fill="#fff"/></g></svg>
<div style="position:absolute;left:236.0px;top:615.0px;font-family:'Liberation Sans', sans-serif;font-size:28px;line-height:28px;color:#BBBBBB;font-weight:normal;font-style:normal;letter-spacing:0px;white-space:pre;-webkit-text-stroke:0.3px currentColor;">consts_user.go</div>
<svg style="position:absolute;left:130.5px;top:659px" width="12" height="18" viewBox="0 0 12 18"><path d="M1.5,1.5 L9.5,9 L1.5,16.5" fill="none" stroke="#BDBDBD" stroke-width="2.3"/></svg>
<svg style="position:absolute;left:163.5px;top:656px" width="29" height="22" viewBox="0 0 29 22"><path d="M0,0 H9 L14,4.3 H28.5 V22 H0 Z" fill="#87939A"/></svg>
<div style="position:absolute;left:200.0px;top:655.0px;font-family:'Liberation Sans', sans-serif;font-size:28px;line-height:28px;color:#BBBBBB;font-weight:normal;font-style:normal;letter-spacing:0px;white-space:pre;-webkit-text-stroke:0.3px currentColor;">controller</div>
<svg style="position:absolute;left:130.5px;top:699px" width="12" height="18" viewBox="0 0 12 18"><path d="M1.5,1.5 L9.5,9 L1.5,16.5" fill="none" stroke="#BDBDBD" stroke-width="2.3"/></svg>
<svg style="position:absolute;left:163.5px;top:696px" width="29" height="22" viewBox="0 0 29 22"><path d="M0,0 H9 L14,4.3 H28.5 V22 H0 Z" fill="#87939A"/></svg>
<div style="position:absolute;left:200.0px;top:695.0px;font-family:'Liberation Sans', sans-serif;font-size:28px;line-height:28px;color:#BBBBBB;font-weight:normal;font-style:normal;letter-spacing:0px;white-space:pre;-webkit-text-stroke:0.3px currentColor;">dao</div>
<svg style="position:absolute;left:130.5px;top:739px" width="12" height="18" viewBox="0 0 12 18"><path d="M1.5,1.5 L9.5,9 L1.5,16.5" fill="none" stroke="#BDBDBD" stroke-width="2.3"/></svg>
<svg style="position:absolute;left:163.5px;top:736px" width="29" height="22" viewBox="0 0 29 22"><path d="M0,0 H9 L14,4.3 H28.5 V22 H0 Z" fill="#87939A"/></svg>
<div style="position:absolute;left:200.0px;top:735.0px;font-family:'Liberation Sans', sans-serif;font-size:28px;line-height:28px;color:#BBBBBB;font-weight:normal;font-style:normal;letter-spacing:0px;white-space:pre;-webkit-text-stroke:0.3px currentColor;">logic</div>
<svg style="position:absolute;left:130.5px;top:779px" width="12" height="18" viewBox="0 0 12 18"><path d="M1.5,1.5 L9.5,9 L1.5,16.5" fill="none" stroke="#BDBDBD" stroke-width="2.3"/></svg>
<svg style="position:absolute;left:163.5px;top:776px" width="29" height="22" viewBox="0 0 29 22"><path d="M0,0 H9 L14,4.3 H28.5 V22 H0 Z" fill="#87939A"/></svg>
<div style="position:absolute;left:200.0px;top:775.0px;font-family:'Liberation Sans', sans-serif;font-size:28px;line-height:28px;color:#BBBBBB;font-weight:normal;font-style:normal;letter-spacing:0px;white-space:pre;-webkit-text-stroke:0.3px currentColor;">model</div>
<svg style="position:absolute;left:130.5px;top:819px" width="12" height="18" viewBox="0 0 12 18"><path d="M1.5,1.5 L9.5,9 L1.5,16.5" fill="none" stroke="#BDBDBD" stroke-width="2.3"/></svg>
<svg style="position:absolute;left:163.5px;top:816px" width="29" height="22" viewBox="0 0 29 22"><path d="M0,0 H9 L14,4.3 H28.5 V22 H0 Z" fill="#87939A"/></svg>
<div style="position:absolute;left:200.0px;top:815.0px;font-family:'Liberation Sans', sans-serif;font-size:28px;line-height:28px;color:#BBBBBB;font-weight:normal;font-style:normal;letter-spacing:0px;white-space:pre;-webkit-text-stroke:0.3px currentColor;">service</div>
<svg style="position:absolute;left:94.5px;top:859px" width="12" height="18" viewBox="0 0 12 18"><path d="M1.5,1.5 L9.5,9 L1.5,16.5" fill="none" stroke="#BDBDBD" stroke-width="2.3"/></svg>
<svg style="position:absolute;left:127.5px;top:856px" width="29" height="22" viewBox="0 0 29 22"><path d="M0,0 H9 L14,4.3 H28.5 V22 H0 Z" fill="#87939A"/></svg>
<div style="position:absolute;left:164.0px;top:855.0px;font-family:'Liberation Sans', sans-serif;font-size:28px;line-height:28px;color:#BBBBBB;font-weight:normal;font-style:normal;letter-spacing:0px;white-space:pre;-webkit-text-stroke:0.3px currentColor;">manifest</div>
<svg style="position:absolute;left:94.5px;top:899px" width="12" height="18" viewBox="0 0 12 18"><path d="M1.5,1.5 L9.5,9 L1.5,16.5" fill="none" stroke="#BDBDBD" stroke-width="2.3"/></svg>
<svg style="position:absolute;left:127.5px;top:896px" width="29" height="22" viewBox="0 0 29 22"><path d="M0,0 H9 L14,4.3 H28.5 V22 H0 Z" fill="#87939A"/></svg>
<div style="position:absolute;left:164.0px;top:895.0px;font-family:'Liberation Sans', sans-serif;font-size:28px;line-height:28px;color:#A0A010;font-weight:normal;font-style:normal;letter-spacing:0px;white-space:pre;-webkit-text-stroke:0.3px currentColor;">temp</div>
<svg style="position:absolute;left:131.5px;top:934px" width="24" height="30" viewBox="0 0 24 30"><path d="M0,8.3 L8.3,0 V8.3 Z" fill="#87939A"/><path d="M10,0 H20 V28 H0 V10 H10 Z" fill="#87939A"/><rect x="4" y="13" width="12" height="1.8" fill="#3C3F41"/><rect x="4" y="17" width="12" height="1.8" fill="#3C3F41"/><rect x="4" y="21" width="8" height="1.8" fill="#3C3F41"/></svg>
<div style="position:absolute;left:164.7px;top:935.0px;font-family:'Liberation Sans', sans-serif;font-size:28px;line-height:28px;color:#BBBBBB;font-weight:normal;font-style:normal;letter-spacing:0px;white-space:pre;-webkit-text-stroke:0.3px currentColor;">.gitattributes</div>
<svg style="position:absolute;left:131.5px;top:974px" width="24" height="30" viewBox="0 0 24 30"><path d="M0,8.3 L8.3,0 V8.3 Z" fill="#87939A"/><path d="M10,0 H20 V14 A9,9 0 0 0 10,28 H0 V10 H10 Z" fill="#87939A"/><circle cx="17" cy="21.5" r="8.5" fill="#3C3F41"/><circle cx="17" cy="21.5" r="6" fill="none" stroke="#87939A" stroke-width="2"/><path d="M13,25.5 L21,17.5" stroke="#87939A" stroke-width="2"/></svg>
<div style="position:absolute;left:164.7px;top:975.0px;font-family:'Liberation Sans', sans-serif;font-size:28px;line-height:28px;color:#BBBBBB;font-weight:normal;font-style:normal;letter-spacing:0px;white-space:pre;-webkit-text-stroke:0.3px currentColor;">.gitignore</div>
<svg style="position:absolute;left:94.5px;top:1019px" width="12" height="18" viewBox="0 0 12 18"><path d="M1.5,1.5 L9.5,9 L1.5,16.5" fill="none" stroke="#BDBDBD" stroke-width="2.3"/></svg>
<svg style="position:absolute;left:131.5px;top:1014px" width="24" height="30" viewBox="0 0 24 30"><path d="M0,8.3 L8.3,0 V8.3 Z" fill="#87939A"/><path d="M10,0 H20 V28 H0 V10 H10 Z" fill="#87939A"/><rect x="4" y="13" width="12" height="1.8" fill="#3C3F41"/><rect x="4" y="17" width="12" height="1.8" fill="#3C3F41"/><rect x="4" y="21" width="8" height="1.8" fill="#3C3F41"/></svg>
<div style="position:absolute;left:164.7px;top:1015.0px;font-family:'Liberation Sans', sans-serif;font-size:28px;line-height:28px;color:#BBBBBB;font-weight:normal;font-style:normal;letter-spacing:0px;white-space:pre;-webkit-text-stroke:0.3px currentColor;">go.mod</div>
<svg style="position:absolute;left:131.5px;top:1054px" width="24" height="30" viewBox="0 0 24 30"><path d="M0,8.3 L8.3,0 V8.3 Z" fill="#87939A"/><path d="M10,0 H20 V28 H0 V10 H10 Z" fill="#87939A"/><rect x="4" y="13" width="12" height="1.8" fill="#3C3F41"/><rect x="4" y="17" width="12" height="1.8" fill="#3C3F41"/><rect x="4" y="21" width="8" height="1.8" fill="#3C3F41"/></svg>
<div style="position:absolute;left:164.7px;top:1055.0px;font-family:'Liberation Sans', sans-serif;font-size:28px;line-height:28px;color:#BBBBBB;font-weight:normal;font-style:normal;letter-spacing:-1.8px;white-space:pre;-webkit-text-stroke:0.3px currentColor;">LICENSE</div>
<svg style="position:absolute;left:132px;top:1094px" width="21" height="28" viewBox="0 0 21 28"><g opacity="1.0"><circle cx="1.8" cy="14.5" r="1.6" fill="#D2A184"/><circle cx="19.2" cy="14.5" r="1.6" fill="#D2A184"/><circle cx="4" cy="25.5" r="1.7" fill="#D2A184"/><circle cx="17" cy="25.5" r="1.7" fill="#D2A184"/><ellipse cx="2.6" cy="5" rx="2.4" ry="2" fill="#77B8E4"/><ellipse cx="18.4" cy="5" rx="2.4" ry="2" fill="#77B8E4"/><path d="M2.6,9 C2.6,3.5 6,0.5 10.5,0.5 C15,0.5 18.4,3.5 18.4,9 L18.6,20 C18.6,25 15,27.6 10.5,27.6 C6,27.6 2.4,25 2.4,20 Z" fill="#77B8E4"/><circle cx="7" cy="8.6" r="3.1" fill="#fff"/><circle cx="14" cy="8.6" r="3.1" fill="#fff"/><circle cx="7.2" cy="8.6" r="1.5" fill="#000"/><circle cx="13.8" cy="8.6" r="1.5" fill="#000"/><ellipse cx="10.5" cy="11.8" rx="1.6" ry="1.1" fill="#222"/><rect x="9.4" y="12.6" width="2.2" height="1.8" fill="#fff"/></g></svg>
<div style="position:absolute;left:164.0px;top:1095.0px;font-family:'Liberation Sans', sans-serif;font-size:28px;line-height:28px;color:#BBBBBB;font-weight:normal;font-style:normal;letter-spacing:0px;white-space:pre;-webkit-text-stroke:0.3px currentColor;">main.go</div>
<svg style="position:absolute;left:130px;top:1137px" width="24" height="21" viewBox="0 0 24 21"><path d="M0,0 H6.5 L12,10 L17.5,0 H24 V21 H19 V9 L13.8,18 H10.2 L5,9 V21 H0 Z" fill="#3D8FB5"/></svg>
<div style="position:absolute;left:164.7px;top:1135.0px;font-family:'Liberation Sans', sans-serif;font-size:28px;line-height:28px;color:#BBBBBB;font-weight:normal;font-style:normal;letter-spacing:0px;white-space:pre;-webkit-text-stroke:0.3px currentColor;">Makefile</div>
<svg style="position:absolute;left:128px;top:1174px" width="31" height="30" viewBox="0 0 31 30"><path d="M4,6.5 L10.5,0 V6.5 Z" fill="#87939A"/><path d="M12,0 H24 V14 H4 V8 H12 Z" fill="#87939A"/><rect x="0" y="16" width="30" height="14" fill="#3E94B8"/><text x="2.5" y="28" font-family="Liberation Sans" font-weight="bold" font-size="12.5" fill="#1E3442">MD</text></svg>
<div style="position:absolute;left:164.7px;top:1175.0px;font-family:'Liberation Sans', sans-serif;font-size:28px;line-height:28px;color:#BBBBBB;font-weight:normal;font-style:normal;letter-spacing:-1.4px;white-space:pre;-webkit-text-stroke:0.3px currentColor;">README.MD</div>
<svg style="position:absolute;left:58.5px;top:1219px" width="12" height="18" viewBox="0 0 12 18"><path d="M1.5,1.5 L9.5,9 L1.5,16.5" fill="none" stroke="#BDBDBD" stroke-width="2.3"/></svg>
<svg style="position:absolute;left:92px;top:1214px" width="29" height="24" viewBox="0 0 29 24"><rect x="0" y="4" width="4" height="20" fill="#87939A"/><rect x="6" y="4" width="4" height="20" fill="#62B543"/><rect x="12" y="0" width="4" height="24" fill="#87939A"/><rect x="18" y="4" width="4" height="20" fill="#40B6E0"/><rect x="24" y="8" width="4" height="16" fill="#87939A"/></svg>
<div style="position:absolute;left:128.7px;top:1215.0px;font-family:'Liberation Sans', sans-serif;font-size:28px;line-height:28px;color:#BBBBBB;font-weight:normal;font-style:normal;letter-spacing:-0.15px;white-space:pre;-webkit-text-stroke:0.3px currentColor;">External Libraries</div>
<svg style="position:absolute;left:58.5px;top:1259px" width="12" height="18" viewBox="0 0 12 18"><path d="M1.5,1.5 L9.5,9 L1.5,16.5" fill="none" stroke="#BDBDBD" stroke-width="2.3"/></svg>
<svg style="position:absolute;left:92px;top:1254px" width="32" height="32" viewBox="0 0 32 32"><rect x="0" y="0" width="20" height="18" fill="#87939A"/><path d="M3,4 L8,8.5 L3,13" fill="none" stroke="#3C3F41" stroke-width="1.6"/><circle cx="20" cy="20" r="11" fill="#3C3F41"/><circle cx="20" cy="20" r="9.6" fill="#40B6E0"/><path d="M19,14 V21 L23,24.5" fill="none" stroke="#3C3F41" stroke-width="2"/></svg>
<div style="position:absolute;left:128.7px;top:1255.0px;font-family:'Liberation Sans', sans-serif;font-size:28px;line-height:28px;color:#BBBBBB;font-weight:normal;font-style:normal;letter-spacing:-0.2px;white-space:pre;-webkit-text-stroke:0.3px currentColor;">Scratches and Consoles</div>
<div style="position:absolute;left:42px;top:1638px;width:544px;height:28px;background:#3D4042;"></div>
<div style="position:absolute;left:47px;top:1643px;width:272px;height:17px;border-radius:9px;background:#58595B;box-shadow:0 0 0 1.5px #333537"></div>
<div style="position:absolute;left:588px;top:166px;width:2442px;height:2px;background:#2B2D2F;"></div>
<div style="position:absolute;left:1428px;top:113px;width:294px;height:49px;background:#4E5254;"></div>
<div style="position:absolute;left:1428px;top:162px;width:294px;height:6px;background:#4A88C7;"></div>
<svg style="position:absolute;left:609px;top:126px" width="21" height="28" viewBox="0 0 21 28"><g opacity="1.0"><circle cx="1.8" cy="14.5" r="1.6" fill="#D2A184"/><circle cx="19.2" cy="14.5" r="1.6" fill="#D2A184"/><circle cx="4" cy="25.5" r="1.7" fill="#D2A184"/><circle cx="17" cy="25.5" r="1.7" fill="#D2A184"/><ellipse cx="2.6" cy="5" rx="2.4" ry="2" fill="#77B8E4"/><ellipse cx="18.4" cy="5" rx="2.4" ry="2" fill="#77B8E4"/><path d="M2.6,9 C2.6,3.5 6,0.5 10.5,0.5 C15,0.5 18.4,3.5 18.4,9 L18.6,20 C18.6,25 15,27.6 10.5,27.6 C6,27.6 2.4,25 2.4,20 Z" fill="#77B8E4"/><circle cx="7" cy="8.6" r="3.1" fill="#fff"/><circle cx="14" cy="8.6" r="3.1" fill="#fff"/><circle cx="7.2" cy="8.6" r="1.5" fill="#000"/><circle cx="13.8" cy="8.6" r="1.5" fill="#000"/><ellipse cx="10.5" cy="11.8" rx="1.6" ry="1.1" fill="#222"/><rect x="9.4" y="12.6" width="2.2" height="1.8" fill="#fff"/></g></svg>
<div style="position:absolute;left:643.0px;top:129.6px;font-family:'Liberation Sans', sans-serif;font-size:23px;line-height:23px;color:#BBBBBB;font-weight:normal;font-style:normal;letter-spacing:0px;white-space:pre;-webkit-text-stroke:0.3px currentColor;">user.go</div>
<svg style="position:absolute;left:734px;top:132px" width="16" height="16" viewBox="0 0 16 16"><path d="M1,1 L15,15 M15,1 L1,15" stroke="#6A6E71" stroke-width="2"/></svg>
<svg style="position:absolute;left:786px;top:126px" width="21" height="28" viewBox="0 0 21 28"><g opacity="1.0"><circle cx="1.8" cy="14.5" r="1.6" fill="#D2A184"/><circle cx="19.2" cy="14.5" r="1.6" fill="#D2A184"/><circle cx="4" cy="25.5" r="1.7" fill="#D2A184"/><circle cx="17" cy="25.5" r="1.7" fill="#D2A184"/><ellipse cx="2.6" cy="5" rx="2.4" ry="2" fill="#77B8E4"/><ellipse cx="18.4" cy="5" rx="2.4" ry="2" fill="#77B8E4"/><path d="M2.6,9 C2.6,3.5 6,0.5 10.5,0.5 C15,0.5 18.4,3.5 18.4,9 L18.6,20 C18.6,25 15,27.6 10.5,27.6 C6,27.6 2.4,25 2.4,20 Z" fill="#77B8E4"/><circle cx="7" cy="8.6" r="3.1" fill="#fff"/><circle cx="14" cy="8.6" r="3.1" fill="#fff"/><circle cx="7.2" cy="8.6" r="1.5" fill="#000"/><circle cx="13.8" cy="8.6" r="1.5" fill="#000"/><ellipse cx="10.5" cy="11.8" rx="1.6" ry="1.1" fill="#222"/><rect x="9.4" y="12.6" width="2.2" height="1.8" fill="#fff"/></g></svg>
<div style="position:absolute;left:819.0px;top:129.6px;font-family:'Liberation Sans', sans-serif;font-size:23px;line-height:23px;color:#BBBBBB;font-weight:normal;font-style:normal;letter-spacing:0px;white-space:pre;-webkit-text-stroke:0.3px currentColor;">cmd.go</div>
<svg style="position:absolute;left:910px;top:132px" width="16" height="16" viewBox="0 0 16 16"><path d="M1,1 L15,15 M15,1 L1,15" stroke="#6A6E71" stroke-width="2"/></svg>
<svg style="position:absolute;left:962px;top:126px" width="21" height="28" viewBox="0 0 21 28"><g opacity="1.0"><circle cx="1.8" cy="14.5" r="1.6" fill="#D2A184"/><circle cx="19.2" cy="14.5" r="1.6" fill="#D2A184"/><circle cx="4" cy="25.5" r="1.7" fill="#D2A184"/><circle cx="17" cy="25.5" r="1.7" fill="#D2A184"/><ellipse cx="2.6" cy="5" rx="2.4" ry="2" fill="#77B8E4"/><ellipse cx="18.4" cy="5" rx="2.4" ry="2" fill="#77B8E4"/><path d="M2.6,9 C2.6,3.5 6,0.5 10.5,0.5 C15,0.5 18.4,3.5 18.4,9 L18.6,20 C18.6,25 15,27.6 10.5,27.6 C6,27.6 2.4,25 2.4,20 Z" fill="#77B8E4"/><circle cx="7" cy="8.6" r="3.1" fill="#fff"/><circle cx="14" cy="8.6" r="3.1" fill="#fff"/><circle cx="7.2" cy="8.6" r="1.5" fill="#000"/><circle cx="13.8" cy="8.6" r="1.5" fill="#000"/><ellipse cx="10.5" cy="11.8" rx="1.6" ry="1.1" fill="#222"/><rect x="9.4" y="12.6" width="2.2" height="1.8" fill="#fff"/></g></svg>
<div style="position:absolute;left:995.0px;top:129.6px;font-family:'Liberation Sans', sans-serif;font-size:23px;line-height:23px;color:#BBBBBB;font-weight:normal;font-style:normal;letter-spacing:0px;white-space:pre;-webkit-text-stroke:0.3px currentColor;">consts.go</div>
<svg style="position:absolute;left:1110px;top:132px" width="16" height="16" viewBox="0 0 16 16"><path d="M1,1 L15,15 M15,1 L1,15" stroke="#6A6E71" stroke-width="2"/></svg>
<svg style="position:absolute;left:1162px;top:126px" width="21" height="28" viewBox="0 0 21 28"><g opacity="1.0"><circle cx="1.8" cy="14.5" r="1.6" fill="#D2A184"/><circle cx="19.2" cy="14.5" r="1.6" fill="#D2A184"/><circle cx="4" cy="25.5" r="1.7" fill="#D2A184"/><circle cx="17" cy="25.5" r="1.7" fill="#D2A184"/><ellipse cx="2.6" cy="5" rx="2.4" ry="2" fill="#77B8E4"/><ellipse cx="18.4" cy="5" rx="2.4" ry="2" fill="#77B8E4"/><path d="M2.6,9 C2.6,3.5 6,0.5 10.5,0.5 C15,0.5 18.4,3.5 18.4,9 L18.6,20 C18.6,25 15,27.6 10.5,27.6 C6,27.6 2.4,25 2.4,20 Z" fill="#77B8E4"/><circle cx="7" cy="8.6" r="3.1" fill="#fff"/><circle cx="14" cy="8.6" r="3.1" fill="#fff"/><circle cx="7.2" cy="8.6" r="1.5" fill="#000"/><circle cx="13.8" cy="8.6" r="1.5" fill="#000"/><ellipse cx="10.5" cy="11.8" rx="1.6" ry="1.1" fill="#222"/><rect x="9.4" y="12.6" width="2.2" height="1.8" fill="#fff"/></g></svg>
<div style="position:absolute;left:1195.0px;top:129.6px;font-family:'Liberation Sans', sans-serif;font-size:23px;line-height:23px;color:#BBBBBB;font-weight:normal;font-style:normal;letter-spacing:0px;white-space:pre;-webkit-text-stroke:0.3px currentColor;">consts_context.go</div>
<svg style="position:absolute;left:1398px;top:132px" width="16" height="16" viewBox="0 0 16 16"><path d="M1,1 L15,15 M15,1 L1,15" stroke="#6A6E71" stroke-width="2"/></svg>
<svg style="position:absolute;left:1450px;top:126px" width="21" height="28" viewBox="0 0 21 28"><g opacity="1.0"><circle cx="1.8" cy="14.5" r="1.6" fill="#D2A184"/><circle cx="19.2" cy="14.5" r="1.6" fill="#D2A184"/><circle cx="4" cy="25.5" r="1.7" fill="#D2A184"/><circle cx="17" cy="25.5" r="1.7" fill="#D2A184"/><ellipse cx="2.6" cy="5" rx="2.4" ry="2" fill="#77B8E4"/><ellipse cx="18.4" cy="5" rx="2.4" ry="2" fill="#77B8E4"/><path d="M2.6,9 C2.6,3.5 6,0.5 10.5,0.5 C15,0.5 18.4,3.5 18.4,9 L18.6,20 C18.6,25 15,27.6 10.5,27.6 C6,27.6 2.4,25 2.4,20 Z" fill="#77B8E4"/><circle cx="7" cy="8.6" r="3.1" fill="#fff"/><circle cx="14" cy="8.6" r="3.1" fill="#fff"/><circle cx="7.2" cy="8.6" r="1.5" fill="#000"/><circle cx="13.8" cy="8.6" r="1.5" fill="#000"/><ellipse cx="10.5" cy="11.8" rx="1.6" ry="1.1" fill="#222"/><rect x="9.4" y="12.6" width="2.2" height="1.8" fill="#fff"/></g></svg>
<div style="position:absolute;left:1483.5px;top:129.6px;font-family:'Liberation Sans', sans-serif;font-size:23px;line-height:23px;color:#BBBBBB;font-weight:normal;font-style:normal;letter-spacing:0px;white-space:pre;-webkit-text-stroke:0.3px currentColor;">consts_openapi.go</div>
<svg style="position:absolute;left:1690px;top:132px" width="16" height="16" viewBox="0 0 16 16"><path d="M1,1 L15,15 M15,1 L1,15" stroke="#6A6E71" stroke-width="2"/></svg>
<svg style="position:absolute;left:1742px;top:126px" width="21" height="28" viewBox="0 0 21 28"><g opacity="1.0"><circle cx="1.8" cy="14.5" r="1.6" fill="#D2A184"/><circle cx="19.2" cy="14.5" r="1.6" fill="#D2A184"/><circle cx="4" cy="25.5" r="1.7" fill="#D2A184"/><circle cx="17" cy="25.5" r="1.7" fill="#D2A184"/><ellipse cx="2.6" cy="5" rx="2.4" ry="2" fill="#77B8E4"/><ellipse cx="18.4" cy="5" rx="2.4" ry="2" fill="#77B8E4"/><path d="M2.6,9 C2.6,3.5 6,0.5 10.5,0.5 C15,0.5 18.4,3.5 18.4,9 L18.6,20 C18.6,25 15,27.6 10.5,27.6 C6,27.6 2.4,25 2.4,20 Z" fill="#77B8E4"/><circle cx="7" cy="8.6" r="3.1" fill="#fff"/><circle cx="14" cy="8.6" r="3.1" fill="#fff"/><circle cx="7.2" cy="8.6" r="1.5" fill="#000"/><circle cx="13.8" cy="8.6" r="1.5" fill="#000"/><ellipse cx="10.5" cy="11.8" rx="1.6" ry="1.1" fill="#222"/><rect x="9.4" y="12.6" width="2.2" height="1.8" fill="#fff"/></g></svg>
<div style="position:absolute;left:1775.0px;top:129.6px;font-family:'Liberation Sans', sans-serif;font-size:23px;line-height:23px;color:#BBBBBB;font-weight:normal;font-style:normal;letter-spacing:0px;white-space:pre;-webkit-text-stroke:0.3px currentColor;">consts_user.go</div>
<svg style="position:absolute;left:1947px;top:132px" width="16" height="16" viewBox="0 0 16 16"><path d="M1,1 L15,15 M15,1 L1,15" stroke="#6A6E71" stroke-width="2"/></svg>
<div style="position:absolute;left:3003px;top:128px;width:6px;height:6px;border-radius:50%;background:#AFB1B3"></div>
<div style="position:absolute;left:3003px;top:137px;width:6px;height:6px;border-radius:50%;background:#AFB1B3"></div>
<div style="position:absolute;left:3003px;top:146px;width:6px;height:6px;border-radius:50%;background:#AFB1B3"></div>
<div style="position:absolute;left:588px;top:168px;width:2442px;height:1454px;background:#2B2B2B;"></div>
<div style="position:absolute;left:588px;top:168px;width:114px;height:1454px;background:#313335;"></div>
<div style="position:absolute;left:701px;top:168px;width:2px;height:1454px;background:#555555;"></div>
<div style="position:absolute;left:703px;top:480px;width:2327px;height:52px;background:#323232;"></div>
<div style="position:absolute;left:2876px;top:168px;width:2px;height:1454px;background:#474747;"></div>
<div style="position:absolute;left:588px;top:1622px;width:2442px;height:2px;background:#393B3D;"></div>
<div style="position:absolute;left:588px;top:1624px;width:2442px;height:42px;background:#303234;"></div>
<div style="position:absolute;left:588px;top:1666px;width:2442px;height:2px;background:#2B2D2F;"></div>
<div style="position:absolute;left:42px;top:1666px;width:544px;height:2px;background:#2B2D2F;"></div>
<div style="position:absolute;left:0px;top:1666px;width:42px;height:2px;background:#2B2D2F;"></div>
<div style="position:absolute;left:3030px;top:1666px;width:42px;height:2px;background:#2B2D2F;"></div>
<div style="position:absolute;left:598.0px;top:182.0px;font-family:'Liberation Mono', monospace;font-size:31px;line-height:31px;color:#606366;font-weight:normal;font-style:normal;letter-spacing:-0.5999999999999979px;white-space:pre;-webkit-text-stroke:0.4px currentColor">1</div>
<div style="position:absolute;left:598.0px;top:234.0px;font-family:'Liberation Mono', monospace;font-size:31px;line-height:31px;color:#606366;font-weight:normal;font-style:normal;letter-spacing:-0.5999999999999979px;white-space:pre;-webkit-text-stroke:0.4px currentColor">2</div>
<div style="position:absolute;left:598.0px;top:286.0px;font-family:'Liberation Mono', monospace;font-size:31px;line-height:31px;color:#606366;font-weight:normal;font-style:normal;letter-spacing:-0.5999999999999979px;white-space:pre;-webkit-text-stroke:0.4px currentColor">3</div>
<div style="position:absolute;left:598.0px;top:338.0px;font-family:'Liberation Mono', monospace;font-size:31px;line-height:31px;color:#606366;font-weight:normal;font-style:normal;letter-spacing:-0.5999999999999979px;white-space:pre;-webkit-text-stroke:0.4px currentColor">4</div>
<div style="position:absolute;left:598.0px;top:390.0px;font-family:'Liberation Mono', monospace;font-size:31px;line-height:31px;color:#606366;font-weight:normal;font-style:normal;letter-spacing:-0.5999999999999979px;white-space:pre;-webkit-text-stroke:0.4px currentColor">5</div>
<div style="position:absolute;left:598.0px;top:442.0px;font-family:'Liberation Mono', monospace;font-size:31px;line-height:31px;color:#606366;font-weight:normal;font-style:normal;letter-spacing:-0.5999999999999979px;white-space:pre;-webkit-text-stroke:0.4px currentColor">6</div>
<div style="position:absolute;left:598.0px;top:494.0px;font-family:'Liberation Mono', monospace;font-size:31px;line-height:31px;color:#A4A3A3;font-weight:normal;font-style:normal;letter-spacing:-0.5999999999999979px;white-space:pre;-webkit-text-stroke:0.4px currentColor">7</div>
<div style="position:absolute;left:716px;top:182.0px;font-family:'Liberation Mono', monospace;font-size:31px;line-height:31px;letter-spacing:-0.60px;white-space:pre;-webkit-text-stroke:0.45px currentColor"><span style="color:#CC7832;font-style:normal;-webkit-text-stroke:0.45px #CC7832">package</span><span style="color:#A9B7C6;font-style:normal;-webkit-text-stroke:0.45px #A9B7C6"> </span><span style="color:#B4C680;font-style:normal;-webkit-text-stroke:0.45px #B4C680">consts</span></div>
<div style="position:absolute;left:716px;top:286.0px;font-family:'Liberation Mono', monospace;font-size:31px;line-height:31px;letter-spacing:-0.60px;white-space:pre;-webkit-text-stroke:0.45px currentColor"><span style="color:#CC7832;font-style:normal;-webkit-text-stroke:0.45px #CC7832">const</span><span style="color:#A9B7C6;font-style:normal;-webkit-text-stroke:0.45px #A9B7C6"> </span><span style="color:#A9B7C6;font-style:normal;-webkit-text-stroke:0.45px #A9B7C6">(</span></div>
<div style="position:absolute;left:716px;top:338.0px;font-family:'Liberation Mono', monospace;font-size:31px;line-height:31px;letter-spacing:-0.60px;white-space:pre;-webkit-text-stroke:0.45px currentColor"><span style="color:#A9B7C6;font-style:normal;-webkit-text-stroke:0.45px #A9B7C6">    </span><span style="color:#9876AA;font-style:italic;-webkit-text-stroke:0.45px #9876AA">OpenAPITitle</span><span style="color:#A9B7C6;font-style:normal;-webkit-text-stroke:0.45px #A9B7C6">       = </span><span style="color:#6A8759;font-style:normal;-webkit-text-stroke:0.45px #6A8759">`GoFrame Demos`</span></div>
<div style="position:absolute;left:716px;top:390.0px;font-family:'Liberation Mono', monospace;font-size:31px;line-height:31px;letter-spacing:-0.60px;white-space:pre;-webkit-text-stroke:0.45px currentColor"><span style="color:#A9B7C6;font-style:normal;-webkit-text-stroke:0.45px #A9B7C6">    </span><span style="color:#9876AA;font-style:italic;-webkit-text-stroke:0.45px #9876AA">OpenAPIDescription</span><span style="color:#A9B7C6;font-style:normal;-webkit-text-stroke:0.45px #A9B7C6"> = </span><span style="color:#6A8759;font-style:normal;-webkit-text-stroke:0.45px #6A8759">`This is a simple demos HTTP server project that is using GoFrame. Enjoy </span></div>
<svg style="position:absolute;left:2480px;top:388px" width="30" height="29" viewBox="0 0 30 29"><defs><linearGradient id="hg" x1="0" y1="0" x2="0" y2="1"><stop offset="0" stop-color="#FF7FD0"/><stop offset="1" stop-color="#D8148C"/></linearGradient></defs><path d="M15,28 C9,23 1,17 1,9.5 C1,4.5 4.5,1 9,1 C12,1 14,3 15,5 C16,3 18,1 21,1 C25.5,1 29,4.5 29,9.5 C29,17 21,23 15,28 Z" fill="url(#hg)"/><path d="M6,17 L7.5,21 L11.5,22.5 L7.5,24 L6,28 L4.5,24 L0.5,22.5 L4.5,21 Z" fill="#FFD54A"/><path d="M24,1 L25,4 L28,5 L25,6 L24,9 L23,6 L20,5 L23,4 Z" fill="#FFD54A"/></svg>
<div style="position:absolute;left:2527.0px;top:390.0px;font-family:'Liberation Mono', monospace;font-size:31px;line-height:31px;color:#6A8759;font-weight:normal;font-style:normal;letter-spacing:-0.5999999999999979px;white-space:pre;-webkit-text-stroke:0.45px currentColor">`</div>
<div style="position:absolute;left:716px;top:442.0px;font-family:'Liberation Mono', monospace;font-size:31px;line-height:31px;letter-spacing:-0.60px;white-space:pre;-webkit-text-stroke:0.45px currentColor"><span style="color:#A9B7C6;font-style:normal;-webkit-text-stroke:0.45px #A9B7C6">)</span></div>
<svg style="position:absolute;left:690px;top:288px" width="24" height="30" viewBox="0 0 24 30"><path d="M2,1.5 H22 V18.5 L12,28.5 L2,18.5 Z" fill="#2B2B2B" stroke="#5E5E5E" stroke-width="2.2"/><rect x="6" y="11" width="12" height="2.2" fill="#5E5E5E"/></svg>
<svg style="position:absolute;left:690px;top:438px" width="24" height="30" viewBox="0 0 24 30"><path d="M2,28.5 H22 V11.5 L12,1.5 L2,11.5 Z" fill="#2B2B2B" stroke="#5E5E5E" stroke-width="2.2"/><rect x="6" y="16.8" width="12" height="2.2" fill="#5E5E5E"/></svg>
<svg style="position:absolute;left:733px;top:449px" width="22" height="30" viewBox="0 0 22 30"><path d="M11,0.5 C16.5,0.5 21,4.5 21,10 C21,13.5 19,16 17.5,18 V21 H4.5 V18 C3,16 1,13.5 1,10 C1,4.5 5.5,0.5 11,0.5 Z" fill="#F0A732"/><rect x="4" y="22.5" width="14" height="2" fill="#C9C9C9"/><path d="M5,26.5 H17 L16,28.5 H6 Z" fill="#C9C9C9"/></svg>
<svg style="position:absolute;left:60px;top:1677px" width="21" height="24" viewBox="0 0 21 24"><circle cx="4" cy="3.5" r="3.2" fill="#AFB1B3"/><circle cx="4" cy="20.5" r="3.2" fill="#AFB1B3"/><circle cx="17" cy="5" r="3.2" fill="#AFB1B3"/><path d="M4,3.5 V20.5 M17,5 C17,12 8,11 4.5,18" fill="none" stroke="#AFB1B3" stroke-width="3"/></svg>
<div style="position:absolute;left:92.0px;top:1677.2px;font-family:'Liberation Sans', sans-serif;font-size:23.5px;line-height:23.5px;color:#BBBBBB;font-weight:normal;font-style:normal;letter-spacing:0px;white-space:pre;-webkit-text-stroke:0.3px currentColor;">Git</div>
<svg style="position:absolute;left:160px;top:1677px" width="26" height="24" viewBox="0 0 26 24"><circle cx="10" cy="10" r="7.8" fill="none" stroke="#666869" stroke-width="3.2"/><path d="M15.5,15.5 L23.5,23" stroke="#666869" stroke-width="3.6"/></svg>
<div style="position:absolute;left:194.0px;top:1677.2px;font-family:'Liberation Sans', sans-serif;font-size:23.5px;line-height:23.5px;color:#6E7072;font-weight:normal;font-style:normal;letter-spacing:0px;white-space:pre;-webkit-text-stroke:0.3px currentColor;">Find</div>
<svg style="position:absolute;left:277px;top:1679px" width="18" height="20" viewBox="0 0 18 20"><path d="M0,0 L18,10 L0,20 Z" fill="#AFB1B3"/></svg>
<div style="position:absolute;left:307.5px;top:1677.2px;font-family:'Liberation Sans', sans-serif;font-size:23.5px;line-height:23.5px;color:#BBBBBB;font-weight:normal;font-style:normal;letter-spacing:-0.8px;white-space:pre;-webkit-text-stroke:0.3px currentColor;">Run</div>
<svg style="position:absolute;left:387px;top:1678px" width="22" height="20" viewBox="0 0 22 20"><g fill="#AFB1B3"><rect x="0" y="1" width="4" height="4"/><rect x="0" y="8" width="4" height="4"/><rect x="0" y="15" width="4" height="4"/><rect x="6.5" y="1" width="15" height="4"/><rect x="6.5" y="8" width="15" height="4"/><rect x="6.5" y="15" width="15" height="4"/></g></svg>
<div style="position:absolute;left:418.5px;top:1677.2px;font-family:'Liberation Sans', sans-serif;font-size:23.5px;line-height:23.5px;color:#BBBBBB;font-weight:normal;font-style:normal;letter-spacing:-1.8px;white-space:pre;-webkit-text-stroke:0.3px currentColor;">TODO</div>
<svg style="position:absolute;left:522px;top:1677px" width="23" height="23" viewBox="0 0 23 23"><circle cx="11.5" cy="11.5" r="11" fill="#AFB1B3"/><rect x="9.8" y="4.5" width="3.4" height="9" fill="#3C3F41"/><rect x="9.8" y="15.5" width="3.4" height="3.4" fill="#3C3F41"/></svg>
<div style="position:absolute;left:554.0px;top:1677.2px;font-family:'Liberation Sans', sans-serif;font-size:23.5px;line-height:23.5px;color:#BBBBBB;font-weight:normal;font-style:normal;letter-spacing:-0.5px;white-space:pre;-webkit-text-stroke:0.3px currentColor;">Problems</div>
<svg style="position:absolute;left:694px;top:1678px" width="22" height="20" viewBox="0 0 22 20"><rect x="0" y="0" width="22" height="20" fill="#AFB1B3"/><path d="M3.5,3.5 L8.5,8.5 L3.5,13.5" fill="none" stroke="#3C3F41" stroke-width="1.8"/><rect x="10" y="14" width="8" height="2" fill="#3C3F41"/></svg>
<div style="position:absolute;left:726.0px;top:1677.2px;font-family:'Liberation Sans', sans-serif;font-size:23.5px;line-height:23.5px;color:#BBBBBB;font-weight:normal;font-style:normal;letter-spacing:-0.5px;white-space:pre;-webkit-text-stroke:0.3px currentColor;">Terminal</div>
<svg style="position:absolute;left:2818px;top:1676px" width="27" height="26" viewBox="0 0 27 26"><rect x="1.2" y="1.2" width="24.6" height="23.6" rx="2" fill="#45484A" stroke="#000" stroke-width="2.4"/><rect x="1.2" y="1.2" width="24.6" height="4.5" fill="#000"/><circle cx="17.5" cy="3.5" r="0.9" fill="#888"/><circle cx="20.3" cy="3.5" r="0.9" fill="#888"/><circle cx="23" cy="3.5" r="0.9" fill="#888"/><text x="13.5" y="19.5" font-family="Liberation Sans" font-weight="bold" font-size="10.5" fill="#000" text-anchor="middle">/API</text></svg>
<div style="position:absolute;left:2852.5px;top:1677.2px;font-family:'Liberation Sans', sans-serif;font-size:23.5px;line-height:23.5px;color:#BBBBBB;font-weight:normal;font-style:normal;letter-spacing:-0.6px;white-space:pre;-webkit-text-stroke:0.3px currentColor;">Audit Problems</div>
<div style="position:absolute;left:0px;top:1708px;width:3072px;height:2px;background:#45484A;"></div>
<svg style="position:absolute;left:12px;top:1718px" width="25" height="24" viewBox="0 0 25 24"><path d="M2,6 V22 H19" fill="none" stroke="#AFB1B3" stroke-width="2.2"/><rect x="6.6" y="1.4" width="16.5" height="16.5" fill="none" stroke="#AFB1B3" stroke-width="2.4"/></svg>
<div style="position:absolute;left:62.0px;top:1719.6px;font-family:'Liberation Sans', sans-serif;font-size:23px;line-height:23px;color:#BBBBBB;font-weight:normal;font-style:normal;letter-spacing:-0.15px;white-space:pre;-webkit-text-stroke:0.3px currentColor;">Compilation failed (10 minutes ago)</div>
<div style="position:absolute;left:2552.0px;top:1719.6px;font-family:'Liberation Sans', sans-serif;font-size:23px;line-height:23px;color:#BBBBBB;font-weight:normal;font-style:normal;letter-spacing:-2px;white-space:pre;-webkit-text-stroke:0.3px currentColor;">7:1</div>
<div style="position:absolute;left:2604.0px;top:1719.6px;font-family:'Liberation Sans', sans-serif;font-size:23px;line-height:23px;color:#BBBBBB;font-weight:normal;font-style:normal;letter-spacing:-2.5px;white-space:pre;-webkit-text-stroke:0.3px currentColor;">LF</div>
<div style="position:absolute;left:2651.5px;top:1719.6px;font-family:'Liberation Sans', sans-serif;font-size:23px;line-height:23px;color:#BBBBBB;font-weight:normal;font-style:normal;letter-spacing:0px;white-space:pre;-webkit-text-stroke:0.3px currentColor;">UTF-8</div>
<div style="position:absolute;left:2742.5px;top:1719.6px;font-family:'Liberation Sans', sans-serif;font-size:23px;line-height:23px;color:#BBBBBB;font-weight:normal;font-style:normal;letter-spacing:-1px;white-space:pre;-webkit-text-stroke:0.3px currentColor;">Tab</div>
<svg style="position:absolute;left:2805px;top:1716px" width="21" height="28" viewBox="0 0 21 28"><circle cx="4" cy="4" r="3.3" fill="#AFB1B3"/><circle cx="4" cy="24" r="3.3" fill="#AFB1B3"/><circle cx="17" cy="5.5" r="3.3" fill="#AFB1B3"/><path d="M4,4 V24 M17,5.5 C17,14 8,13 4.5,21" fill="none" stroke="#AFB1B3" stroke-width="2.8"/></svg>
<div style="position:absolute;left:2836.0px;top:1719.6px;font-family:'Liberation Sans', sans-serif;font-size:23px;line-height:23px;color:#BBBBBB;font-weight:normal;font-style:normal;letter-spacing:0px;white-space:pre;-webkit-text-stroke:0.3px currentColor;">master</div>
<svg style="position:absolute;left:2925px;top:1718px" width="24" height="24" viewBox="0 0 24 24"><path d="M4,10 V7 C4,3.5 6.5,1.5 9.5,1.5 C12.5,1.5 15,3.5 15,7" fill="none" stroke="#AFB1B3" stroke-width="2.6"/><rect x="7" y="11" width="16" height="13" fill="#AFB1B3"/></svg>
<svg style="position:absolute;left:2971px;top:1715px" width="34" height="32" viewBox="0 0 34 32"><path d="M6,21 C2.5,21 0.5,18.5 0.5,15.5 C0.5,12.5 2.5,10 5.5,10 C6,5 10,1.5 15.5,1.5 C21,1.5 25,5 25.5,10 C28.5,10.5 30.5,13 30.5,16 C30.5,19 28.5,21 25.5,21 Z" fill="#AFB1B3"/><path d="M11.5,7.5 C11.5,4.5 13.5,3 15.5,3 C17.5,3 19.5,4.5 19.5,7 C19.5,10 15.5,10.5 15.5,13.5" fill="none" stroke="#3C3F41" stroke-width="2.3"/><rect x="14.3" y="15.5" width="2.4" height="2.4" fill="#3C3F41"/><circle cx="25" cy="22.5" r="9" fill="#3C3F41"/><path d="M23.06,17.46 L23.14,15.55 L26.86,15.55 L26.94,17.46 A5.4,5.4 0 0 1 28.40,18.30 L28.40,18.30 L30.09,17.41 L31.95,20.64 L30.33,21.66 A5.4,5.4 0 0 1 30.33,23.34 L30.33,23.34 L31.95,24.36 L30.09,27.59 L28.40,26.70 A5.4,5.4 0 0 1 26.94,27.54 L26.94,27.54 L26.86,29.45 L23.14,29.45 L23.06,27.54 A5.4,5.4 0 0 1 21.60,26.70 L21.60,26.70 L19.91,27.59 L18.05,24.36 L19.67,23.34 A5.4,5.4 0 0 1 19.67,21.66 L19.67,21.66 L18.05,20.64 L19.91,17.41 L21.60,18.30 A5.4,5.4 0 0 1 23.06,17.46 Z M25,20.3 A2.2,2.2 0 1 0 25.01,20.3 Z" fill="#AFB1B3" fill-rule="evenodd"/></svg>
<svg style="position:absolute;left:3024px;top:1718px" width="24" height="24" viewBox="0 0 24 24"><circle cx="12" cy="12" r="12" fill="#555759"/><rect x="10.3" y="5" width="3.4" height="9" fill="#3C3F41"/><rect x="10.3" y="16" width="3.4" height="3.4" fill="#3C3F41"/></svg>
</div>
<div style="position:absolute;left:0;top:0;width:3072px;height:1750px;box-sizing:border-box;border:2px solid #6A6C6E;border-top-color:#8E8F90;border-radius:22px;pointer-events:none"></div>
</body></html>
